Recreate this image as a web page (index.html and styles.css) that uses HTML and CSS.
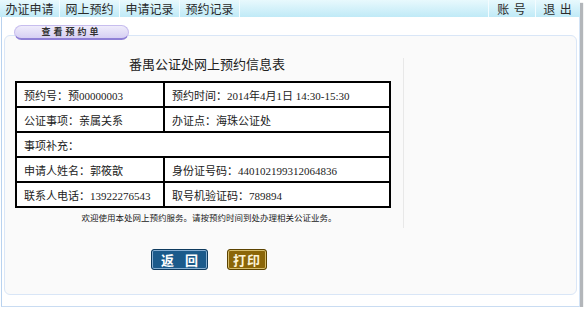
FILE: index.html
```html
<!DOCTYPE html>
<html lang="zh-CN">
<head>
<meta charset="utf-8">
<title>查看预约单</title>
<link rel="stylesheet" href="styles.css">
</head>
<body>
<div class="window">
  <nav class="topnav">
    <ul class="nav-left">
      <li>办证申请</li>
      <li>网上预约</li>
      <li>申请记录</li>
      <li>预约记录</li>
    </ul>
    <ul class="nav-right">
      <li>账 号</li>
      <li>退 出</li>
    </ul>
  </nav>
  <div class="main">
    <div class="tab">查看预约单</div>
    <div class="panel">
      <div class="sheet">
        <h1 class="title">番禺公证处网上预约信息表</h1>
        <table class="info">
          <tr>
            <td class="c1">预约号：预00000003</td>
            <td>预约时间：2014年4月1日 14:30-15:30</td>
          </tr>
          <tr>
            <td class="c1">公证事项：亲属关系</td>
            <td>办证点：海珠公证处</td>
          </tr>
          <tr>
            <td colspan="2">事项补充：</td>
          </tr>
          <tr>
            <td class="c1">申请人姓名：郭筱歆</td>
            <td>身份证号码：440102199312064836</td>
          </tr>
          <tr>
            <td class="c1">联系人电话：13922276543</td>
            <td>取号机验证码：789894</td>
          </tr>
        </table>
        <p class="note">欢迎使用本处网上预约服务。请按预约时间到处办理相关公证业务。</p>
      </div>
      <div class="actions">
        <button class="btn btn-back">返 回</button>
        <button class="btn btn-print">打印</button>
      </div>
    </div>
  </div>
</div>
</body>
</html>
```
FILE: styles.css
```css
html, body {
  margin: 0;
  padding: 0;
  background: #fff;
}
body {
  font-family: "Liberation Serif", "Noto Sans CJK SC", serif;
  color: #222;
}
.window {
  width: 580px;
  box-shadow: 3px 3px 1px #b3b6ba;
}
.topnav {
  height: 17px;
  display: flex;
  justify-content: space-between;
  background: linear-gradient(#e8f9fd, #c0eaf7);
  font-family: "Noto Sans CJK SC", sans-serif;
  font-size: 12px;
  line-height: 17px;
  color: #2a2a2a;
}
.topnav ul {
  list-style: none;
  margin: 0;
  padding: 0;
  display: flex;
}
.nav-left li {
  width: 59px;
  text-align: center;
  border-right: 1px solid #f3fcff;
}
.nav-right li {
  width: 46px;
  text-align: center;
  border-left: 1px solid #f3fcff;
  letter-spacing: 1px;
}
.nav-right li + li {
  width: 44px;
}
.main {
  height: 281px;
  border-left: 1px solid #b9d2ee;
  border-right: 1px solid #d3e3f5;
  border-bottom: 1px solid #c9dcf2;
  margin-left: 1px;
  padding: 8px 2px 0 2px;
  background: #fff;
}
.tab {
  position: relative;
  z-index: 1;
  width: 113px;
  height: 12px;
  margin-left: 10px;
  margin-bottom: -5px;
  border: 1px solid #c7bdee;
  border-bottom: 2px solid #8f80d6;
  border-radius: 8px;
  background: linear-gradient(#efecfb, #d6cff3);
  font-family: "Noto Sans CJK SC", sans-serif;
  font-size: 9px;
  font-weight: bold;
  line-height: 12px;
  letter-spacing: 3px;
  text-align: center;
  color: #333;
}
.panel {
  height: 260px;
  box-sizing: border-box;
  border: 1px solid #d9e6f7;
  border-radius: 6px;
  background: #fafafa;
  padding-top: 22px;
}
.sheet {
  width: 388px;
  height: 170px;
  padding-left: 10px;
  border-right: 1px solid #e8e8e8;
}
.title {
  margin: 0 0 11px 0;
  font-family: "Noto Sans CJK SC", sans-serif;
  font-size: 13px;
  font-weight: normal;
  line-height: 12px;
  text-align: center;
  padding-right: 4px;
  color: #222;
}
.info {
  width: 376px;
  border-collapse: collapse;
  background: #fff;
  font-size: 11px;
}
.info td {
  border: 2px solid #000;
  height: 23px;
  padding: 0 0 0 7px;
  white-space: nowrap;
  color: #222;
}
.info td.c1 {
  width: 139px;
}
.note {
  margin: 4px 0 0 0;
  font-family: "Noto Sans CJK SC", sans-serif;
  font-size: 8.5px;
  line-height: 11px;
  text-align: center;
  padding-right: 0;
  color: #222;
}
.actions {
  width: 388px;
  padding-left: 10px;
  margin-top: 21px;
  display: flex;
  justify-content: center;
  gap: 19px;
}
.btn {
  height: 21px;
  box-sizing: border-box;
  padding: 0;
  border-radius: 3px;
  font-family: "Noto Sans CJK SC", sans-serif;
  font-size: 13px;
  font-weight: bold;
  line-height: 17px;
  cursor: pointer;
}
.btn-back {
  width: 57px;
  background: #1b5a8b;
  border: 1px solid #0e3a5e;
  box-shadow: inset 0 0 0 1px #86aed2;
  color: #fff;
  letter-spacing: 4px;
  padding-left: 4px;
}
.btn-print {
  width: 40px;
  background: #8b6609;
  border: 1px solid #5c4300;
  box-shadow: inset 0 0 0 1px #d6bd6c;
  color: #fbf3d6;
  letter-spacing: 1px;
}
```
